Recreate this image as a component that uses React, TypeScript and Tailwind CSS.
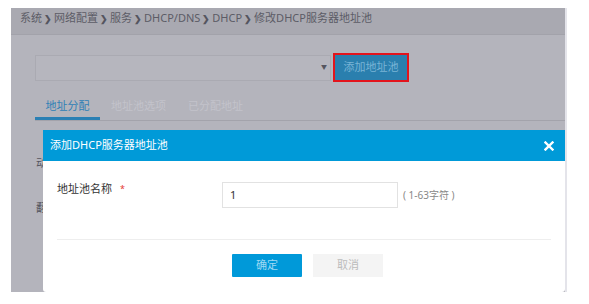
const font = { fontFamily: '"Noto Sans", "Noto Sans CJK SC", sans-serif' };

const crumbs = ["系统", "网络配置", "服务", "DHCP/DNS", "DHCP", "修改DHCP服务器地址池"];

function Breadcrumb() {
  return (
    <div className="h-[27px] bg-[#a9a9b1] border-b border-[#a2a2aa] flex items-start pt-[2px] pl-[9px] text-[11px] text-[#5c5c66]">
      {crumbs.map((c, i) => (
        <span key={c} className="flex items-center">
          {i > 0 && <span className="mx-[2px] font-bold text-[9px] text-[#55555f]">❯</span>}
          <span>{c}</span>
        </span>
      ))}
    </div>
  );
}

function Toolbar() {
  return (
    <div className="flex items-center pl-[24px] pt-[18px]">
      <div className="w-[296px] h-[26px] border border-[#aaaab2] bg-[#b6b6be] flex items-center justify-end pr-[3px]">
        <span className="text-[6px] text-[#55555f]">▼</span>
      </div>
      <div className="ml-[2px] border-2 border-[#e3141c]">
        <div className="w-[72px] h-[25px] bg-[#2a7fae] text-[11px] text-[#79b4d6] flex items-center justify-center">
          添加地址池
        </div>
      </div>
    </div>
  );
}

function Tabs() {
  const tabs = ["地址分配", "地址池选项", "已分配地址"];
  return (
    <div className="ml-[24px] mt-[12px] flex border-b border-[#a3a3ab] text-[11px]">
      {tabs.map((t, i) => (
        <div
          key={t}
          className={
            i === 0
              ? "w-[65px] h-[26px] flex items-start justify-center pt-[4px] text-[#2f80b6] border-b-[3px] border-[#2a80b4] -mb-px"
              : "h-[26px] px-[11px] pt-[4px] text-[#c3c3cb]"
          }
        >
          {t}
        </div>
      ))}
    </div>
  );
}

function Modal() {
  return (
    <div className="absolute left-[32px] top-[122px] w-[522px] h-[162px] bg-white rounded-b-[3px] flex flex-col">
      <div className="h-[31px] bg-[#009ad8] flex items-center justify-between pl-[7px] pr-[11px] text-white">
        <span className="text-[11px]">添加DHCP服务器地址池</span>
        <svg width="10" height="10" viewBox="0 0 10 10">
          <path d="M1.5 1.5 L8.5 8.5 M8.5 1.5 L1.5 8.5" stroke="white" strokeWidth="2.4" strokeLinecap="square" />
        </svg>
      </div>
      <div className="flex items-center pl-[14px] pt-[21px]">
        <div className="w-[165px] text-[11px] text-[#333] flex items-center -mt-[12px]">
          地址池名称
          <span className="ml-[8px] text-[#e53935] text-[9px]">*</span>
        </div>
        <div className="w-[176px] h-[26px] border border-[#e2e2e2] flex items-center pl-[7px] text-[11px] text-[#333]">
          1
        </div>
        <span className="ml-[5px] text-[10px] text-[#888]">( 1-63字符 )</span>
      </div>
      <div className="mx-[14px] mt-[31px] border-t border-[#eeeeee]" />
      <div className="flex justify-center gap-[11px] mt-[14px] pl-[7px]">
        <div className="w-[70px] h-[23px] bg-[#0099d9] rounded-[1px] text-[11px] text-[#9fd8f3] flex items-center justify-center">
          确定
        </div>
        <div className="w-[70px] h-[23px] bg-[#f4f4f4] text-[11px] text-[#bcbcbc] flex items-center justify-center">
          取消
        </div>
      </div>
    </div>
  );
}

export default function App() {
  return (
    <div className="w-[589px] h-[304px] bg-white pt-[8px] pl-[11px] flex" style={font}>
      <div className="w-[554px] h-[284px] bg-[#b4b4bc] relative overflow-hidden">
        <Breadcrumb />
        <Toolbar />
        <Tabs />
        <div className="pl-[25px] pt-[34px] text-[11px] text-[#55555f] flex flex-col gap-[28px]">
          <span>动态绑定</span>
          <span>翻译地址</span>
        </div>
        <Modal />
      </div>
      <div className="w-[2px] h-[284px] bg-[#e4e4ea]" />
    </div>
  );
}
